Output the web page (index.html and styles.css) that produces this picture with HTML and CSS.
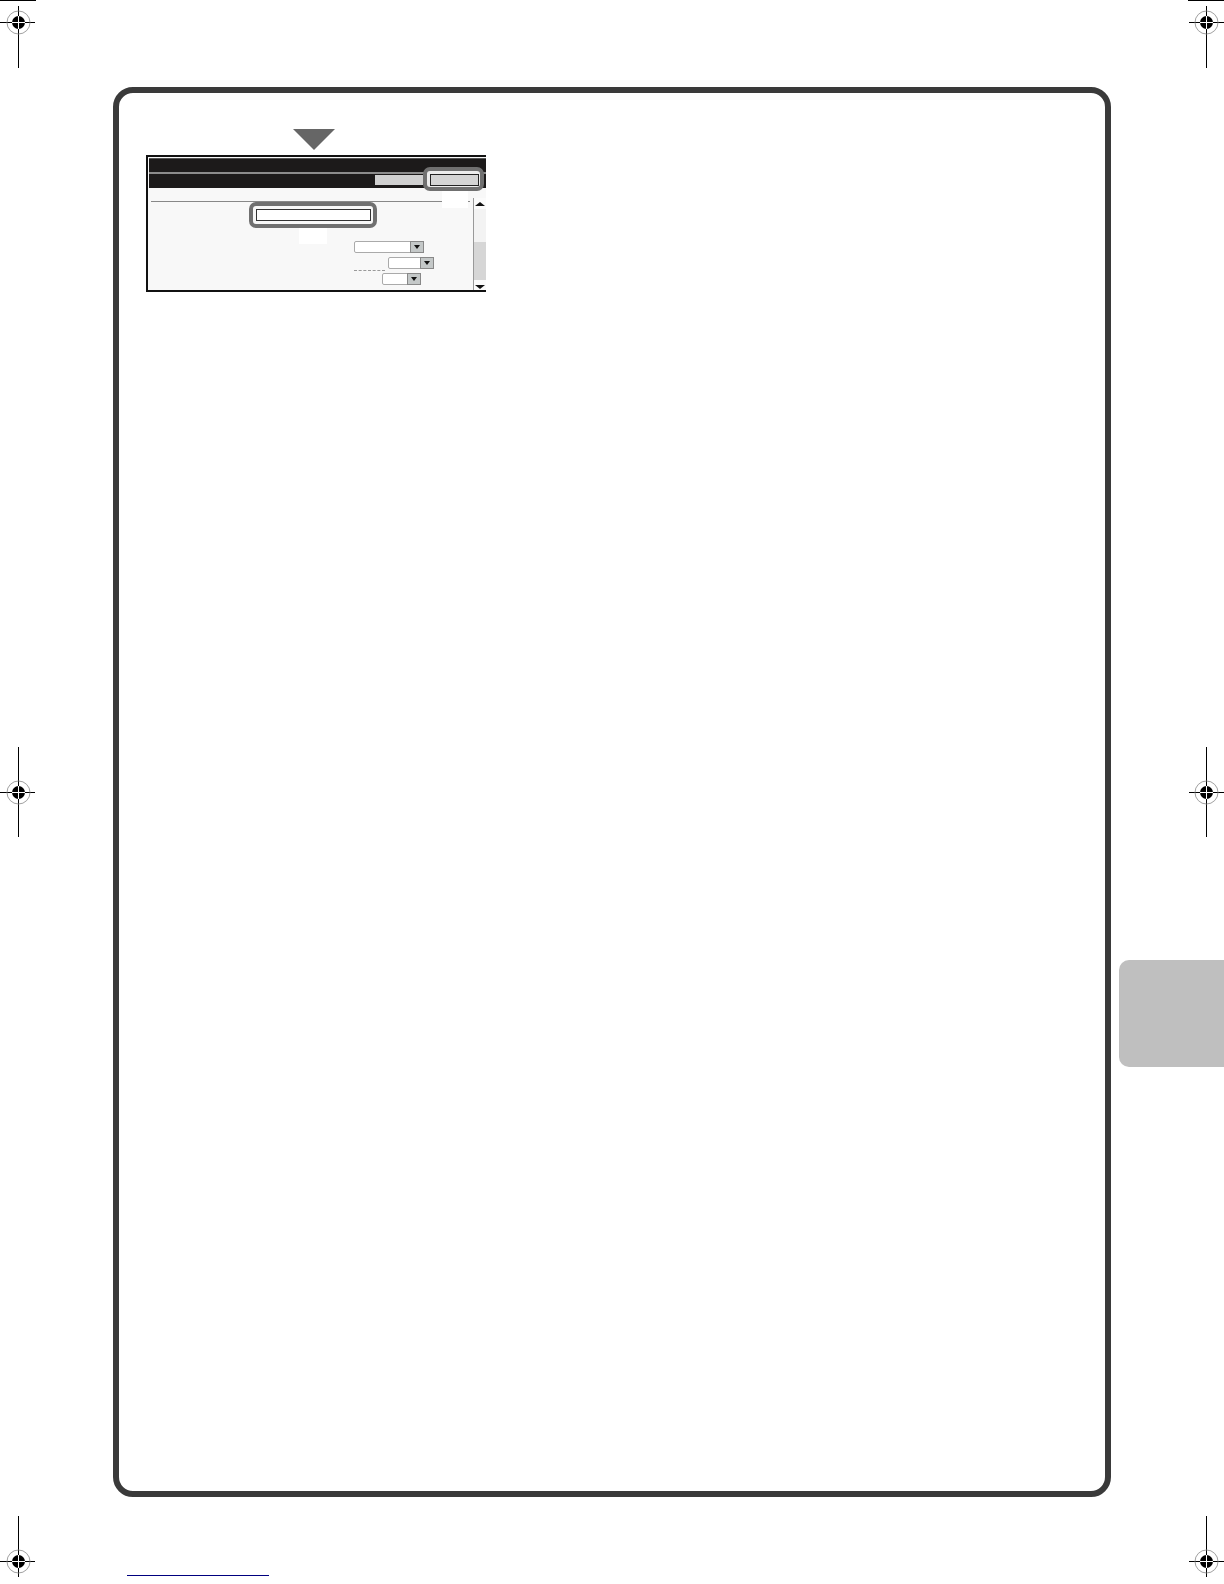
FILE: index.html
```html
<!DOCTYPE html>
<html lang="en">
<head>
<meta charset="utf-8">
<title>Screen settings</title>
<link rel="stylesheet" href="styles.css">
</head>
<body>
<div class="page">
  <svg class="marks" viewBox="0 0 1224 1584" aria-hidden="true">
    <defs>
      <g id="reg">
        <circle class="ring" r="11.5"/>
        <circle class="dot" r="6.5"/>
        <path class="cross" d="M-6.5 0H6.5M0-6.5V6.5"/>
      </g>
    </defs>
    <path class="ink" d="M0 .5H36M1188 .5H1224"/>
    <path class="ink" d="M18.5 6V68M0 22.5H35M1206.5 6V68M1189 22.5H1224"/>
    <path class="ink" d="M18.5 747V837M0 792.5H35M1206.5 747V837M1189 792.5H1224"/>
    <path class="ink" d="M18.5 1516V1577M0 1561.5H35M1206.5 1516V1577M1189 1561.5H1224"/>
    <use href="#reg" x="18.5" y="22.5"/>
    <use href="#reg" x="1206.5" y="22.5"/>
    <use href="#reg" x="18.5" y="792.5"/>
    <use href="#reg" x="1206.5" y="792.5"/>
    <use href="#reg" x="18.5" y="1561.5"/>
    <use href="#reg" x="1206.5" y="1561.5"/>
    <path class="rule" d="M127 1575.5H269"/>
  </svg>

  <main class="frame">
    <div class="arrow"></div>
    <section class="screen">
      <div class="bar bar-top"></div>
      <div class="bar bar-actions">
        <span class="btn-back"></span>
        <span class="btn-ok"></span>
      </div>
      <div class="panel">
        <div class="form">
          <hr class="divider">
          <div class="name-input"></div>
          <div class="select select-a"><i class="caret"></i></div>
          <div class="row-b">
            <span class="label-faint"></span>
            <div class="select select-b"><i class="caret"></i></div>
          </div>
          <div class="select select-c"><i class="caret"></i></div>
        </div>
        <div class="scrollbar">
          <span class="arrow-btn up"></span>
          <span class="track"></span>
          <span class="thumb"></span>
          <span class="arrow-btn down"></span>
        </div>
      </div>
      <div class="callout callout-ok"></div>
      <div class="mask mask-ok"></div>
      <div class="callout callout-name"></div>
      <div class="mask mask-name"></div>
    </section>
  </main>

  <aside class="tab"></aside>
</div>
</body>
</html>
```

FILE: styles.css
```css
html, body {
  margin: 0;
  padding: 0;
  background: #fff;
}

.page {
  position: relative;
  width: 1224px;
  height: 1584px;
  overflow: hidden;
  padding: 87px 0 0 113px;
  box-sizing: border-box;
  font-family: "Liberation Sans", sans-serif;
}

.marks {
  position: absolute;
  top: 0;
  left: 0;
  width: 1224px;
  height: 1584px;
}

.ink { stroke: #000; stroke-width: 1; fill: none; }
.ring { fill: none; stroke: #888; stroke-width: .8; }
.dot { fill: #000; }
.cross { stroke: #fff; stroke-width: 1; fill: none; }
.rule { stroke: #00007f; stroke-width: 1; fill: none; }

.frame {
  position: relative;
  width: 998px;
  height: 1410px;
  box-sizing: border-box;
  border: 6px solid #3a3a3a;
  border-radius: 20px;
  padding: 36px 0 0 27px;
}

.arrow {
  width: 0;
  height: 0;
  margin-left: 147px;
  border-left: 21.5px solid transparent;
  border-right: 21.5px solid transparent;
  border-top: 21px solid #666;
}

.screen {
  position: relative;
  width: 340px;
  height: 137px;
  margin-top: 5px;
  box-sizing: border-box;
  background: #f8f8f8;
  border-top: 2px solid #111;
  border-bottom: 2px solid #111;
  border-left: 2px solid #111;
  padding: 1px 0 0 1px;
  display: flex;
  flex-direction: column;
  filter: blur(.35px);
}

.bar {
  background: #1c1a1a;
  flex: none;
  box-sizing: border-box;
}

.bar-top {
  height: 16px;
  border-top: 1px solid #555;
  border-bottom: 2px solid #8c8c8c;
}

.bar-actions {
  height: 14px;
  display: flex;
  justify-content: flex-end;
  align-items: flex-start;
  padding: 1px 7px 0 0;
}

.btn-back {
  width: 48px;
  height: 10px;
  background: #d0d0d0;
  margin-right: 7px;
}

.btn-ok {
  width: 49px;
  height: 12px;
  box-sizing: border-box;
  margin-top: -1px;
  background: #d4d4d4;
  border: 1px solid #222;
  box-shadow: 0 0 0 3px #ececec;
}

.panel {
  flex: 1;
  display: flex;
  min-height: 0;
}

.form {
  flex: 1;
  padding: 13px 3px 0 2px;
  min-width: 0;
}

.divider {
  margin: 0 0 7px;
  border: 0;
  height: 1px;
  width: 319px;
  background: #888;
}

.name-input {
  width: 115px;
  height: 12px;
  margin-left: 105px;
  box-sizing: border-box;
  background: #fff;
  border: 1px solid #333;
}

.select {
  position: relative;
  box-sizing: border-box;
  height: 12px;
  background: #fff;
  border: 1px solid #aaa;
  border-radius: 2px 0 0 2px;
}

.select-a {
  width: 70px;
  margin: 20px 0 0 203px;
}

.row-b {
  display: flex;
  align-items: flex-end;
  margin: 4px 0 0 203px;
}

.label-faint {
  width: 31px;
  height: 1px;
  margin: 0 3px -2px 0;
  border-bottom: 1px dashed #9a9a9a;
}

.select-b { width: 46px; }

.select-c {
  width: 39px;
  margin: 4px 0 0 231px;
}

.caret {
  position: absolute;
  top: -1px;
  right: -1px;
  width: 14px;
  height: 12px;
  background: #c4c8c8;
  border: 1px solid #888;
  box-sizing: border-box;
}

.caret::after {
  content: "";
  position: absolute;
  top: 3px;
  left: 3px;
  border-left: 3px solid transparent;
  border-right: 3px solid transparent;
  border-top: 4px solid #111;
}

.scrollbar {
  flex: none;
  width: 13px;
  margin-top: 10px;
  display: flex;
  flex-direction: column;
  box-sizing: border-box;
  border-left: 1px solid #999;
  background: #fbfbfb;
}

.arrow-btn {
  flex: none;
  height: 11px;
  position: relative;
}

.arrow-btn.down { height: 10px; }

.arrow-btn::after {
  content: "";
  position: absolute;
  left: 1px;
  border-left: 5px solid transparent;
  border-right: 5px solid transparent;
}

.arrow-btn.up::after {
  top: 4px;
  border-bottom: 4px solid #111;
}

.arrow-btn.down::after {
  top: 5px;
  border-top: 4px solid #111;
}

.track {
  flex: none;
  height: 33px;
  background: #f3f3f3;
}

.thumb {
  flex: 1;
  background: #d6d6d6;
}

.callout {
  position: absolute;
  box-sizing: border-box;
  border: 4px solid #707070;
  border-radius: 7px;
  z-index: 2;
}

.callout-ok {
  top: 10px;
  left: 275px;
  width: 61px;
  height: 24px;
}

.callout-name {
  top: 45px;
  left: 101px;
  width: 128px;
  height: 26px;
}

.mask {
  position: absolute;
  background: #fff;
  z-index: 3;
}

.mask-ok {
  top: 34px;
  left: 294px;
  width: 26px;
  height: 17px;
}

.mask-name {
  top: 71px;
  left: 151px;
  width: 28px;
  height: 16px;
}

.tab {
  position: absolute;
  top: 960px;
  left: 1119px;
  width: 115px;
  height: 107px;
  background: #bfbfbf;
  border-radius: 10px;
}
```
